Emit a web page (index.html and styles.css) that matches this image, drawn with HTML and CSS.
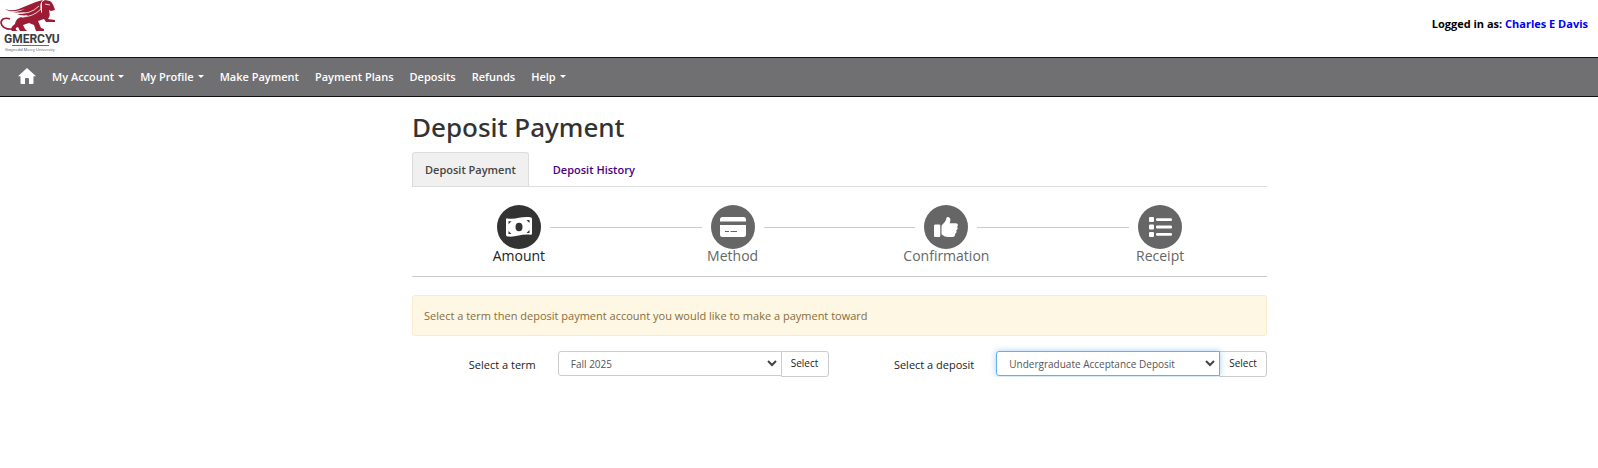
FILE: index.html
```
<!DOCTYPE html>
<html lang="en">
<head>
    <meta charset="UTF-8">
    <meta name="viewport" content="width=device-width, initial-scale=1.0">
    <title>Deposit Payment</title>
    <link rel="stylesheet" href="styles.css">
</head>
<body>
    <header class="site-header">
        <svg class="logo" viewBox="0 0 60 54" role="img" aria-label="GMercyU, Gwynedd Mercy University">
            <!-- wings -->
            <path fill="#9b1c34" d="M5 9C13 12 19 9 26 6C33 3 38 1 43 0C40 3 40 6 41 11C42 16 39 21 33 21C28 21 26 18 22 17C25 17 27 16 28 15C23 16 20 15 17 14C21 14 24 13 26 12C20 13 16 13 13 12C18 12 22 10 25 9C18 11 10 13 5 9Z"/>
            <!-- body and legs -->
            <path fill="#9b1c34" d="M42 2L45 0L50 1C53 3 54 7 55 10L51 11L49 10C50 14 50 17 48 19L55 20V22H46L44 19L38 21L41 28L44 29V31H36L34 25L29 23L23 25L25 29L27 31H20L18 27C15 28 14 29 18 31H12C10 29 12 26 15 24C16 19 20 16 25 18L36 20L42 12Z"/>
            <path fill="none" stroke="#9b1c34" stroke-width="1.6" d="M16 29C8 30 2 28 1 23C1 19 5 17 10 19"/>
            <path fill="none" stroke="#fff" stroke-width="0.8" d="M17 13Q30 15 39 6M22 17Q33 17 41 9M45 4L50 5"/>
            <text class="logo-name" x="4" y="43" fill="#3c3d42">GMERCYU</text>
            <path fill="#b04a5b" d="M12 45H49V46H12Z"/>
            <text class="logo-sub" x="5" y="51" fill="#555">Gwynedd Mercy University</text>
        </svg>
        <p class="login">Logged in as: <a href="#">Charles E Davis</a></p>
    </header>

    <nav class="navbar">
        <a class="home" href="#" aria-label="Home">
            <svg viewBox="0 0 18 16" width="18" height="16" fill="#fff"><path d="M9 0L18 8.200H15.500V15Q15.500 16 14.500 16H11V11Q11 10 10 10H8Q7 10 7 11V16H3.500Q2.500 16 2.500 15V8.200H0Z"/></svg>
        </a>
        <a class="dropdown" href="#">My Account</a>
        <a class="dropdown" href="#">My Profile</a>
        <a href="#">Make Payment</a>
        <a href="#">Payment Plans</a>
        <a href="#">Deposits</a>
        <a href="#">Refunds</a>
        <a class="dropdown" href="#">Help</a>
    </nav>

    <div class="page">
        <main class="content">
            <h1>Deposit Payment</h1>

            <div class="tabs">
                <a class="tab active" href="#">Deposit Payment</a>
                <a class="tab" href="#">Deposit History</a>
            </div>

            <ol class="steps">
                <li class="step current">
                    <span class="circle">
                        <svg viewBox="0 0 26 20" width="26" height="20">
                            <path fill="#fff" d="M0 2.500Q0 1.200 1.400 1.400C10 3 15-1 24.500 0.300Q26 0.500 26 2V16.500Q26 18 24.500 17.800C16 16.500 10 20.500 1.500 19.500Q0 19.300 0 17.800Z"/>
                            <ellipse cx="13" cy="10" rx="3.500" ry="4.200" fill="#333"/>
                            <path fill="#333" d="M2.500 4.200H5.500L2.500 7.200ZM2.500 14L5.500 17H2.500ZM20.500 3H23.500V6ZM23.500 13V16H20.500Z"/>
                        </svg>
                    </span>
                    <span class="step-name">Amount</span>
                </li>
                <li class="step">
                    <span class="circle">
                        <svg viewBox="0 0 26 20" width="26" height="20">
                            <path fill="#fff" d="M2.500 0H23.500Q26 0 26 2.500V4.500H0V2.500Q0 0 2.500 0ZM0 8H26V17.500Q26 20 23.500 20H2.500Q0 20 0 17.500Z"/>
                            <path fill="#666" d="M5 14H9V15H5ZM10.500 14H17V15H10.500Z"/>
                        </svg>
                    </span>
                    <span class="step-name">Method</span>
                </li>
                <li class="step">
                    <span class="circle">
                        <svg viewBox="0 0 24 20" width="24" height="20" fill="#fff">
                            <path d="M1.300 7.500H5Q6.300 7.500 6.300 8.800V18.700Q6.300 20 5 20H1.300Q0 20 0 18.700V8.800Q0 7.500 1.300 7.500Z"/>
                            <path d="M7.500 10C7.500 8.500 8 7.700 9.200 6.700C11 5.200 12 3.500 12.300 1.600C12.500 0.200 13.500-0.200 14.700 0.200C16.800 1 16.700 3.400 15.600 6.300H21.800C24 6.300 24.600 8.700 23 9.800C24.200 11 23.600 13 22.200 13.500C23 15 22.200 16.500 21 16.800C21.400 18.600 20.500 20 18.800 20H14C11 20 9.500 18.700 7.500 17.200Z"/>
                        </svg>
                    </span>
                    <span class="step-name">Confirmation</span>
                </li>
                <li class="step">
                    <span class="circle">
                        <svg viewBox="0 0 23 20" width="23" height="20" fill="#fff">
                            <rect x="0" y="0" width="5" height="5" rx="1"/>
                            <rect x="0" y="7.500" width="5" height="5" rx="1"/>
                            <rect x="0" y="15" width="5" height="5" rx="1"/>
                            <rect x="7" y="1.200" width="16" height="2.800" rx="1.200"/>
                            <rect x="7" y="8.600" width="16" height="2.800" rx="1.200"/>
                            <rect x="7" y="16" width="16" height="2.800" rx="1.200"/>
                        </svg>
                    </span>
                    <span class="step-name">Receipt</span>
                </li>
            </ol>

            <div class="alert">Select a term then deposit payment account you would like to make a payment toward</div>

            <form class="selectors">
                <div class="field">
                    <label for="term">Select a term</label>
                    <div class="select-wrap">
                        <select id="term"><option>Fall 2025</option></select>
                        <svg class="chevron" viewBox="0 0 10 7" width="10" height="7"><path d="M1 1L5 5L9 1"/></svg>
                    </div>
                    <button type="button">Select</button>
                </div>
                <div class="field">
                    <label for="deposit">Select a deposit</label>
                    <div class="select-wrap">
                        <select id="deposit" class="focused"><option>Undergraduate Acceptance Deposit</option></select>
                        <svg class="chevron" viewBox="0 0 10 7" width="10" height="7"><path d="M1 1L5 5L9 1"/></svg>
                    </div>
                    <button type="button">Select</button>
                </div>
            </form>
        </main>
    </div>
</body>
</html>
```

FILE: styles.css
```
* {
    box-sizing: border-box;
}
body {
    margin: 0;
    font-family: "Segoe UI", "Open Sans", "Noto Sans", sans-serif;
    font-size: 11px;
    line-height: 17px;
    color: #222;
    background-color: #fff;
}
a {
    text-decoration: none;
}
.site-header {
    display: flex;
    justify-content: space-between;
    height: 57px;
    padding-right: 10px;
}
.logo {
    width: 60px;
    height: 54px;
}
.logo-name {
    font: bold 12px "Roboto", sans-serif;
}
.logo-sub {
    font: 4px "Open Sans", sans-serif;
}
.login {
    margin: 15px 0 0;
    font-weight: 700;
    color: #000;
}
.login a {
    color: #00f;
}
.navbar {
    display: flex;
    align-items: center;
    gap: 16px;
    height: 40px;
    padding: 0 18px 2px;
    background-color: #707072;
    border-top: 1px solid #111;
    border-bottom: 1px solid #111;
}
.navbar a {
    color: #fff;
    font-weight: 600;
}
.home {
    display: flex;
}
.dropdown::after {
    content: "";
    display: inline-block;
    margin-left: 4px;
    vertical-align: 3px;
    border-top: 3px solid #fff;
    border-left: 3px solid transparent;
    border-right: 3px solid transparent;
}
.page {
    display: grid;
    grid-template-columns: 412fr minmax(0, 855px) 331fr;
}
.content {
    grid-column: 2;
}
h1 {
    margin: 12px 0 7px;
    font-family: "Segoe UI", "Noto Sans", sans-serif;
    font-size: 26px;
    line-height: 36px;
    font-weight: 500;
    color: #333;
}
.tabs {
    display: flex;
    border-bottom: 1px solid #ddd;
}
.tab {
    padding: 8px 12px;
    border: 1px solid transparent;
    border-bottom: 0;
    font-weight: 600;
    color: #4b0082;
}
.tab.active {
    margin-right: 11px;
    color: #444;
    background-color: #f0f0f0;
    border-color: #ddd;
    border-radius: 3px 3px 0 0;
}
.steps {
    display: flex;
    margin: 0;
    padding: 18px 0 13px;
    list-style: none;
    border-bottom: 1px solid #ccc;
}
.step {
    flex: 1;
    display: grid;
    grid-template-columns: 1fr 44px 1fr;
    column-gap: 9px;
    align-items: center;
    color: #666;
}
.step::before,
.step::after {
    content: "";
    height: 1px;
    background-color: #ccc;
}
.step:first-child::before,
.step:last-child::after {
    background-color: transparent;
}
.circle {
    display: flex;
    align-items: center;
    justify-content: center;
    height: 44px;
    border-radius: 50%;
    background-color: #666;
}
.step-name {
    grid-row: 2;
    grid-column: 1 / 4;
    font-size: 14px;
    line-height: 14px;
    text-align: center;
}
.current {
    color: #222;
}
.current .circle {
    background-color: #333;
}
.alert {
    margin: 18px 0 15px;
    padding: 11px;
    color: #8a6d3b;
    background-color: #fdf7e3;
    border: 1px solid #faebcc;
    border-radius: 3px;
}
.selectors {
    display: grid;
    grid-template-columns: 1fr 1fr;
    gap: 22px;
}
.field {
    display: grid;
    grid-template-columns: 35% 1fr auto;
    align-items: start;
}
.field label {
    padding: 5px 22px 0 0;
    text-align: right;
}
.select-wrap {
    position: relative;
}
select {
    appearance: none;
    display: block;
    width: 100%;
    height: 25px;
    padding: 0 12px;
    font-family: inherit;
    font-size: 10px;
    color: #555;
    background-color: #fff;
    border: 1px solid #ccc;
    border-radius: 3px 0 0 3px;
    outline: none;
}
select.focused {
    border-color: #66afe9;
    box-shadow: 0 0 6px rgba(102, 175, 233, 0.6);
}
.chevron {
    position: absolute;
    top: 9px;
    right: 5px;
    fill: none;
    stroke: #444;
    stroke-width: 2;
    pointer-events: none;
}
.field button {
    width: 48px;
    height: 26px;
    margin-left: -1px;
    padding: 0 0 2px;
    font-family: inherit;
    font-size: 10px;
    color: #222;
    background-color: #fff;
    border: 1px solid #ccc;
    border-radius: 0 3px 3px 0;
}
```
